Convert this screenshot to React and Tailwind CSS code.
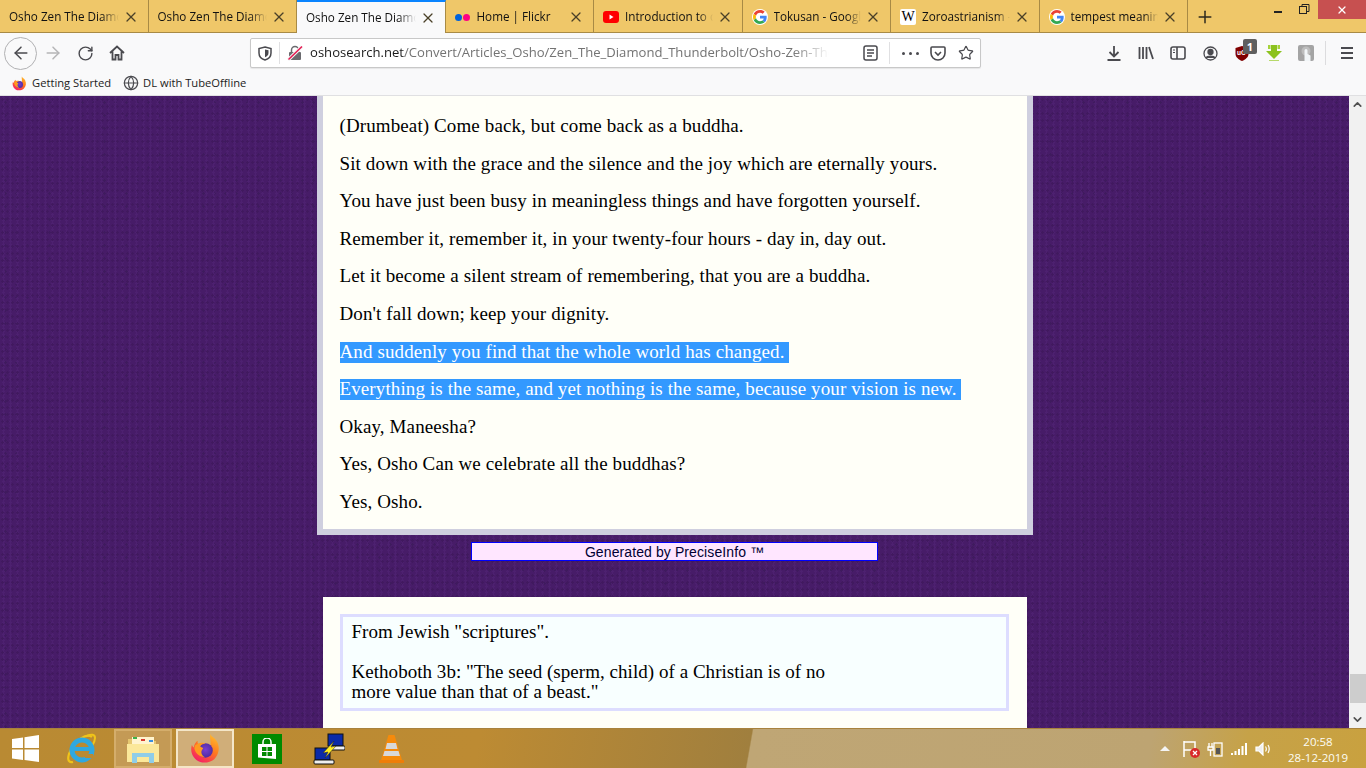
import { ArrowLeft, ArrowRight, RotateCw, Plus, X, Star, ChevronUp, ChevronDown, Globe } from "lucide-react";

const uiFont = "font-['Open_Sans','Noto_Sans',sans-serif]";

function FirefoxLogo({ size = 16, id = "ff" }) {
    return (
        <svg width={size} height={size} viewBox="0 0 32 32">
            <defs>
                <linearGradient id={`${id}Outer`} x1="0.8" y1="0" x2="0.2" y2="1">
                    <stop offset="0" stopColor="#ffbd2e" />
                    <stop offset="0.45" stopColor="#ff7a1f" />
                    <stop offset="1" stopColor="#f5156c" />
                </linearGradient>
                <radialGradient id={`${id}Inner`} cx="0.5" cy="0.45" r="0.6">
                    <stop offset="0" stopColor="#7a3fd0" />
                    <stop offset="1" stopColor="#4a2a9c" />
                </radialGradient>
            </defs>
            <path d="M21 1c1 3 5 4 7 8 3 6 2 13-3 18-5 4-13 5-18 1C2 24 0 18 2 12c.5 1.500 1 2 2 3 0-3 2-6 4-7-.5 2 0 3 1 4 2-1 5-1 7 0 3 0 4 1 5 2 1-5-1-9 0-13z" fill={`url(#${id}Outer)`} />
            <circle cx="16" cy="18" r="7.500" fill={`url(#${id}Inner)`} />
            <path d="M5 13c3-3 8-4 11-2-3 0-5 1-5.500 3 1 1 3 1 3 2-3 3-2 7 2 9 -5 0-10-4-11-9z" fill="#ff9a1f" />
        </svg>
    );
}

function GoogleIcon() {
    return (
        <span className="flex h-4 w-4 shrink-0 items-center justify-center rounded-full bg-white">
            <svg width="14" height="14" viewBox="0 0 48 48">
                <path fill="#EA4335" d="M24 9.500c3.500 0 6.700 1.300 9.100 3.400l6.800-6.800C35.800 2.400 30.300 0 24 0 14.600 0 6.500 5.400 2.600 13.200l7.900 6.200C12.400 13.600 17.700 9.500 24 9.500z" />
                <path fill="#4285F4" d="M46.900 24.500c0-1.600-.1-3.100-.4-4.500H24v9h12.900c-.6 3-2.200 5.500-4.700 7.200l7.700 6c4.500-4.200 7-10.300 7-17.700z" />
                <path fill="#FBBC05" d="M10.500 28.600c-.5-1.400-.8-3-.8-4.600s.3-3.200.8-4.600l-7.900-6.200C.9 16.500 0 20.100 0 24s.9 7.500 2.600 10.800l7.900-6.200z" />
                <path fill="#34A853" d="M24 48c6.500 0 11.900-2.100 15.900-5.800l-7.700-6c-2.200 1.400-4.900 2.300-8.200 2.300-6.300 0-11.600-4.100-13.500-9.900l-7.900 6.200C6.500 42.600 14.600 48 24 48z" />
            </svg>
        </span>
    );
}

const tabs = [
    { title: "Osho Zen The Diamond" },
    { title: "Osho Zen The Diamond" },
    { title: "Osho Zen The Diamond", active: true },
    { title: "Home | Flickr", icon: "flickr" },
    { title: "Introduction to chan", icon: "youtube" },
    { title: "Tokusan - Google", icon: "google" },
    { title: "Zoroastrianism - Wiki", icon: "wiki" },
    { title: "tempest meaning", icon: "google" },
];

function TabIcon({ type }) {
    if (type === "flickr") {
        return (
            <span className="flex w-4 shrink-0 items-center gap-[1px]">
                <span className="h-[7px] w-[7px] rounded-full bg-[#0063dc]" />
                <span className="h-[7px] w-[7px] rounded-full bg-[#ff0084]" />
            </span>
        );
    }
    if (type === "youtube") {
        return (
            <svg width="16" height="12" viewBox="0 0 16 12" className="shrink-0">
                <rect width="16" height="12" rx="3" fill="#f00" />
                <path d="M6.500 3.500v5l4-2.500z" fill="#fff" />
            </svg>
        );
    }
    if (type === "google") return <GoogleIcon />;
    if (type === "wiki") {
        return (
            <span className="flex h-4 w-4 shrink-0 items-center justify-center rounded-[2px] bg-white font-['Liberation_Serif',serif] text-[14px] leading-none text-black">
                W
            </span>
        );
    }
    return null;
}

function Tab({ title, icon, active }) {
    return (
        <div
            className={`relative flex w-[148.500px] shrink-0 items-center border-r border-[#a88a45] pl-[9px] pr-[9px] ${
                active ? "-mb-px border-t-2 border-t-[#0a84ff] bg-[#f9f9fa]" : "pt-[2px]"
            }`}
        >
            {icon && (
                <span className="mr-[6px] flex w-4 shrink-0 items-center justify-center">
                    <TabIcon type={icon} />
                </span>
            )}
            <span className="min-w-0 flex-1 overflow-hidden whitespace-nowrap text-[11.700px] text-[#111] [mask-image:linear-gradient(to_right,black_84%,transparent)]">
                {title}
            </span>
            <X size={16} strokeWidth={1.900} className="ml-[4px] shrink-0 text-[#4a4028]" />
        </div>
    );
}

function TabBar() {
    return (
        <div className="flex h-[33px] shrink-0 items-stretch border-b border-[#a88a45] bg-[#efc769]">
            {tabs.map((t, i) => (
                <Tab key={i} {...t} />
            ))}
            <div className="flex w-[34px] shrink-0 items-center justify-center pt-px">
                <Plus size={20} strokeWidth={1.800} className="text-[#2e2a1e]" />
            </div>
            <div className="flex flex-1 items-start justify-end">
                <div className="mr-[17px] mt-[11px] h-[2px] w-[8px] bg-[#222]" />
                <svg width="11" height="11" viewBox="0 0 11 11" className="mr-[8px] mt-[4px]" fill="none" stroke="#222">
                    <rect x="0.500" y="2.500" width="7" height="7" />
                    <path d="M3 2.500V.500h7v7H8" />
                </svg>
                <div className="flex h-[19px] w-[48px] items-center justify-center bg-[#c75050]">
                    <X size={12} strokeWidth={2.500} className="text-white" />
                </div>
            </div>
        </div>
    );
}

function Toolbar() {
    const grey = "#4a4a4f";
    return (
        <div className="flex h-[38px] shrink-0 items-center bg-[#f9f9fa] pt-[2px]">
            <div className="ml-[4px] flex h-[33px] w-[33px] shrink-0 items-center justify-center rounded-full border border-[#b1b1b3] bg-[#f9f9fa]">
                <ArrowLeft size={20} strokeWidth={1.800} color={grey} />
            </div>
            <div className="flex w-[32px] shrink-0 justify-center">
                <ArrowRight size={20} strokeWidth={1.800} color="#b5b5b7" />
            </div>
            <div className="flex w-[32px] shrink-0 justify-center">
                <RotateCw size={17} strokeWidth={2} color={grey} />
            </div>
            <div className="flex w-[32px] shrink-0 justify-center">
                <svg width="16" height="16" viewBox="0 0 16 16" fill="none" stroke={grey} strokeWidth="1.800">
                    <path d="M1 8l7-6.500L15 8M3.500 6.500V14.500h3V10h3v4.500h3V6.500" />
                </svg>
            </div>
            <div className="ml-[117px] flex h-[30px] w-[731px] shrink-0 items-center rounded-[2px] border border-[#c8c8c8] bg-white pr-[6px] shadow-[0_1px_1px_rgba(0,0,0,0.08)]">
                <div className="flex w-[28px] shrink-0 justify-center">
                    <svg width="14" height="15" viewBox="0 0 14 15" fill="none" stroke={grey} strokeWidth="1.500">
                        <path d="M7 1l6 1.500V7c0 3.500-2.500 6-6 7-3.500-1-6-3.500-6-7V2.500z" />
                        <path d="M7 3.500l3.500.8V7c0 2-1.400 3.500-3.500 4.300z" fill={grey} stroke="none" />
                    </svg>
                </div>
                <div className="h-[22px] w-px shrink-0 bg-[#e0e0e2]" />
                <div className="flex w-[30px] shrink-0 justify-center">
                    <svg width="16" height="16" viewBox="0 0 16 16">
                        <rect x="2" y="7" width="12" height="8" rx="1" fill="#6a6a6e" />
                        <path d="M4.500 7V5a3.500 3.500 0 017 0v2" fill="none" stroke="#6a6a6e" strokeWidth="1.500" />
                        <path d="M1 15L15 1.500" stroke="#f5f5f5" strokeWidth="3.500" />
                        <path d="M1.500 14.500L15 1.500" stroke="#e5174f" strokeWidth="1.500" />
                    </svg>
                </div>
                <div className="min-w-0 flex-1 overflow-hidden whitespace-nowrap text-[13.100px] text-[#737373] [mask-image:linear-gradient(to_right,black_93%,transparent)]">
                    <span className="text-[#1a1a1a]">oshosearch.net</span>/Convert/Articles_Osho/Zen_The_Diamond_Thunderbolt/Osho-Zen-The-Diamond
                </div>
                <div className="ml-[33px] flex w-[16px] shrink-0 justify-center">
                    <svg width="15" height="16" viewBox="0 0 15 16" fill="none" stroke={grey} strokeWidth="1.500">
                        <rect x="1" y="1" width="13" height="14" rx="2" />
                        <path d="M4 5h7M4 8h7M4 11h5" />
                    </svg>
                </div>
                <div className="ml-[11px] h-[22px] w-px shrink-0 bg-[#e0e0e2]" />
                <div className="ml-[12px] flex w-[17px] shrink-0 items-center justify-between">
                    <span className="h-[3px] w-[3px] rounded-full bg-[#4a4a4f]" />
                    <span className="h-[3px] w-[3px] rounded-full bg-[#4a4a4f]" />
                    <span className="h-[3px] w-[3px] rounded-full bg-[#4a4a4f]" />
                </div>
                <div className="ml-[11px] flex w-[16px] shrink-0 justify-center">
                    <svg width="16" height="15" viewBox="0 0 16 15" fill="none" stroke={grey} strokeWidth="1.600">
                        <path d="M2 1h12a1 1 0 011 1v5a7 7 0 01-14 0V2a1 1 0 011-1z" />
                        <path d="M5 6l3 3 3-3" />
                    </svg>
                </div>
                <div className="ml-[12px] flex w-[16px] shrink-0 justify-center">
                    <Star size={16} strokeWidth={1.800} color={grey} />
                </div>
            </div>
            <div className="ml-[125px] flex w-[16px] shrink-0 justify-center">
                <svg width="16" height="16" viewBox="0 0 16 16" fill="none" stroke={grey} strokeWidth="1.800">
                    <path d="M8 1v10M3.500 7L8 11.500 12.500 7M1.500 15h13" />
                </svg>
            </div>
            <div className="ml-[16px] flex w-[16px] shrink-0 justify-center">
                <svg width="16" height="16" viewBox="0 0 16 16" fill="none" stroke={grey} strokeWidth="1.800">
                    <path d="M1.500 2v12M5 2v12M8.500 2v12M11 2l4 12" />
                </svg>
            </div>
            <div className="ml-[16px] flex w-[16px] shrink-0 justify-center">
                <svg width="16" height="14" viewBox="0 0 16 14" fill="none" stroke={grey} strokeWidth="1.600">
                    <rect x="1" y="1" width="14" height="12" rx="2" />
                    <path d="M7 1v12" />
                    <path d="M3 4h2M3 6.500h2" strokeWidth="1" />
                </svg>
            </div>
            <div className="ml-[16px] flex w-[16px] shrink-0 justify-center">
                <svg width="15" height="15" viewBox="0 0 15 15" fill="none" stroke={grey} strokeWidth="1.300">
                    <circle cx="7.500" cy="7.500" r="6.500" />
                    <circle cx="7.500" cy="6" r="2.500" fill={grey} />
                    <path d="M3 12c1-2.500 8-2.500 9 0" fill={grey} />
                </svg>
            </div>
            <div className="relative ml-[16px] flex w-[16px] shrink-0 justify-center">
                <svg width="14" height="15" viewBox="0 0 14 15">
                    <path d="M7 0l6.500 2v6c0 3-3 5.500-6.500 7C3.500 13.500.500 11 .500 8V2z" fill="#800000" />
                    <text x="2" y="9" fontSize="6.500" fontWeight="700" fill="#fff" fontFamily="Liberation Sans, sans-serif">uO</text>
                </svg>
                <span className={`absolute -top-[7px] left-[9px] flex h-[15px] w-[14px] items-center justify-center rounded-[2px] bg-[#5f5f5f] text-[11px] font-bold leading-none text-white ${uiFont}`}>
                    1
                </span>
            </div>
            <div className="ml-[16px] flex w-[16px] shrink-0 justify-center">
                <svg width="16" height="16" viewBox="0 0 16 16">
                    <path d="M2 0h2.500v4H2zM11.500 0H14v4h-2.500z" fill="#a6d33c" />
                    <path d="M5 0h6v6h5L8 14 0 6h5z" fill="#8cc21f" />
                    <path d="M3 15h10v1H3z" fill="#b7d96a" />
                </svg>
            </div>
            <div className="ml-[16px] flex h-[16px] w-[16px] shrink-0 items-center justify-center rounded-[2px] bg-[#a4a4a4]">
                <svg width="16" height="16" viewBox="0 0 16 16">
                    <circle cx="8" cy="6" r="4.500" fill="#bdbdbd" />
                    <path d="M6.500 16V5.500a1.500 1.500 0 013 0V9l3 1.500V16z" fill="#f2f6f8" />
                </svg>
            </div>
            <div className="ml-[11px] h-[24px] w-px shrink-0 bg-[#dcdcde]" />
            <div className="ml-[15px] flex w-[12px] shrink-0 flex-col gap-[3px]">
                <span className="h-[2px] w-full bg-[#4a4a4f]" />
                <span className="h-[2px] w-full bg-[#4a4a4f]" />
                <span className="h-[2px] w-full bg-[#4a4a4f]" />
            </div>
        </div>
    );
}

function Bookmarks() {
    return (
        <div className="flex h-[25px] shrink-0 items-center border-b border-[#e0e0e2] bg-[#f9f9fa] pl-[12px] text-[11.200px] text-[#222]">
            <FirefoxLogo size={15} id="ffMark" />
            <span className="ml-[5px]">Getting Started</span>
            <Globe size={16} strokeWidth={1.800} color="#4a4a4f" className="ml-[12px]" />
            <span className="ml-[4px]">DL with TubeOffline</span>
        </div>
    );
}

const paragraphs = [
    { text: "(Drumbeat) Come back, but come back as a buddha." },
    { text: "Sit down with the grace and the silence and the joy which are eternally yours." },
    { text: "You have just been busy in meaningless things and have forgotten yourself." },
    { text: "Remember it, remember it, in your twenty-four hours - day in, day out." },
    { text: "Let it become a silent stream of remembering, that you are a buddha." },
    { text: "Don't fall down; keep your dignity." },
    { text: "And suddenly you find that the whole world has changed.", selected: true },
    { text: "Everything is the same, and yet nothing is the same, because your vision is new.", selected: true },
    { text: "Okay, Maneesha?" },
    { text: "Yes, Osho Can we celebrate all the buddhas?" },
    { text: "Yes, Osho." },
];

function Page() {
    return (
        <div className="flex min-h-0 flex-1">
            <main className="min-w-0 flex-1 overflow-hidden bg-[#471c68] bg-[radial-gradient(circle,#41195f_1px,transparent_1.500px),radial-gradient(circle,#4d2170_1px,transparent_1.500px),radial-gradient(circle,#3f1b5e_1px,transparent_1.200px)] bg-[length:5px_7px,7px_3px,11px_13px]">
                <div className="mx-auto w-[716px] border-x-[6px] border-b-[6px] border-[#cfcfdf] bg-[#fffff8] px-[17px] pb-[17px] pt-[20px] font-['Liberation_Serif',serif] text-[19px] tracking-[0.11px] text-black">
                    <div className="flex flex-col gap-[17.600px]">
                        {paragraphs.map((p, i) => (
                            <p key={i} className="h-[20px] whitespace-nowrap leading-[20px]">
                                <span className={p.selected ? "inline-block h-[21px] bg-[#3399ff] pr-[4px] text-white" : ""}>
                                    {p.text}
                                </span>
                            </p>
                        ))}
                    </div>
                </div>
                <div className="mx-auto mt-[7px] h-[19px] w-[407px] border border-[#0000ff] bg-[#ffe6ff] text-center font-['Liberation_Sans',sans-serif] text-[14px] tracking-[0.1px] leading-[18px] text-[#000033]">
                    Generated by PreciseInfo ™
                </div>
                <div className="mx-auto mt-[36px] h-[200px] w-[704px] bg-[#fffff8] px-[17px] pt-[17px] font-['Liberation_Serif',serif] text-[19px] tracking-[0.04px] text-black">
                    <div className="h-[97px] w-[669px] border-[3px] border-[#ddddff] bg-[#f8ffff] px-[9px] pt-[5px] leading-[20px]">
                        <p>From Jewish "scriptures".</p>
                        <p className="mt-[20px]">
                            Kethoboth 3b: "The seed (sperm, child) of a Christian is of no
                            <br />
                            more value than that of a beast."
                        </p>
                    </div>
                </div>
            </main>
            <div className="flex w-[17px] shrink-0 flex-col bg-[#f1f1f1]">
                <div className="flex h-[17px] items-center justify-center">
                    <ChevronUp size={13} strokeWidth={3} color="#505050" />
                </div>
                <div className="min-h-0 flex-1" />
                <div className="ml-px h-[29px] bg-[#cdcdcd]" />
                <div className="h-[8px]" />
                <div className="flex h-[17px] items-center justify-center">
                    <ChevronDown size={13} strokeWidth={3} color="#505050" />
                </div>
            </div>
        </div>
    );
}

function TaskSlot({ children, highlight }) {
    return (
        <div
            className={`flex h-[39px] w-[58px] shrink-0 items-center justify-center ${
                highlight === "active"
                    ? "border-2 border-[#f4e6c8] bg-[#d0ae79]"
                    : highlight === "open"
                      ? "border-2 border-[#d4ad6b] bg-[#c49a55]"
                      : ""
            }`}
        >
            {children}
        </div>
    );
}

function Taskbar() {
    return (
        <div className="flex h-[40px] shrink-0 items-center border-t border-[#a8823c] bg-[linear-gradient(100deg,#b98a33_0%,#bd8b33_35%,#a07f3e_54.800%,#bfa675_54.900%,#bda472_84%,#c6a248_91%,#c9a13f_100%)]">
            <div className="flex w-[50px] shrink-0 justify-center">
                <svg width="27" height="27" viewBox="0 0 27 27" fill="#fff">
                    <path d="M0 4l11-1.500V13H0zM12.500 2.300L27 0v13H12.500zM0 14.500h11V25L0 23.500zM12.500 14.500H27V27l-14.500-2z" />
                </svg>
            </div>
            <div className="ml-[2px] flex gap-[4px]">
                <TaskSlot>
                    <svg width="32" height="32" viewBox="0 0 32 32" fill="none">
                        <path d="M27 4C22 0 10 6 4 21c-2 6 0 9 4 8" stroke="#f0c419" strokeWidth="2.200" />
                        <path d="M22 3c4-2 8-2 8 2 0 2-1 5-3 8" stroke="#f0c419" strokeWidth="2" />
                        <circle cx="17" cy="17" r="10" stroke="#2fa8e0" strokeWidth="5" />
                        <path d="M9 16h17" stroke="#2fa8e0" strokeWidth="4" />
                        <path d="M20 23h8" stroke="#b98a33" strokeWidth="4" />
                    </svg>
                </TaskSlot>
                <TaskSlot highlight="open">
                    <svg width="32" height="30" viewBox="0 0 32 30">
                        <path d="M1 5h10l2 2h16v17H1z" fill="#e6c770" />
                        <rect x="5" y="3" width="22" height="8" fill="#fff4cf" />
                        <rect x="6" y="3" width="4" height="2" fill="#3fb24a" />
                        <rect x="14" y="5" width="4" height="2" fill="#d83b2f" />
                        <rect x="22" y="6" width="4" height="2" fill="#3a8fdd" />
                        <path d="M0 10h32v18H0z" fill="#fbe89a" />
                        <path d="M5 29v-10h22v10h-5v-6H10v6z" fill="#8fcde8" />
                    </svg>
                </TaskSlot>
                <TaskSlot highlight="active">
                    <FirefoxLogo size={31} id="ffTask" />
                </TaskSlot>
                <TaskSlot>
                    <div className="flex h-[30px] w-[30px] items-center justify-center bg-[#008a00]">
                        <svg width="20" height="22" viewBox="0 0 20 22">
                            <path d="M1 6h18v15l-18-1.500z" fill="#fff" />
                            <path d="M6 6V4a4 4 0 018 0v2" fill="none" stroke="#fff" strokeWidth="1.500" />
                            <path d="M5 9h4.500v4H5zM10.500 9H15v4h-4.500zM5 14h4.500v4H5zM10.500 14H15v4h-4.500z" fill="#008a00" />
                        </svg>
                    </div>
                </TaskSlot>
                <TaskSlot>
                    <svg width="32" height="32" viewBox="0 0 32 32">
                        <rect x="15" y="1" width="15" height="12" fill="#0b2aa8" stroke="#111" />
                        <rect x="16" y="13" width="16" height="4" rx="1" fill="#eee" stroke="#111" />
                        <rect x="2" y="15" width="15" height="12" fill="#0b2aa8" stroke="#111" />
                        <rect x="1" y="27" width="20" height="4" rx="1" fill="#eee" stroke="#111" />
                        <path d="M21 8L10 20l5-1-3 6 11-12-5 1z" fill="#ffee22" stroke="#222" strokeWidth="0.500" />
                    </svg>
                </TaskSlot>
                <TaskSlot>
                    <svg width="27" height="30" viewBox="0 0 27 30">
                        <path d="M10.500 1h6L24 26H3z" fill="#f58a0b" />
                        <path d="M9 9h9l1.500 6h-12zM6.500 17h14l1.500 5H5z" fill="#d8d8d8" />
                        <path d="M1 26h25v3H1z" fill="#ee7d08" />
                    </svg>
                </TaskSlot>
            </div>
            <div className="flex-1" />
            <div className="flex items-center">
                <svg width="10" height="5" viewBox="0 0 10 5" fill="#f4f4f4">
                    <path d="M0 5l5-5 5 5z" />
                </svg>
                <div className="relative ml-[12px]">
                    <svg width="16" height="17" viewBox="0 0 16 17" fill="none" stroke="#fff" strokeWidth="1.500">
                        <path d="M2 1v16M2 2h11v8H2" />
                    </svg>
                    <svg width="10" height="10" viewBox="0 0 10 10" className="absolute -bottom-[1px] left-[8px]">
                        <circle cx="5" cy="5" r="5" fill="#d92a2a" />
                        <path d="M3 3l4 4M7 3L3 7" stroke="#fff" strokeWidth="1.300" />
                    </svg>
                </div>
                <svg width="16" height="16" viewBox="0 0 16 16" fill="none" stroke="#fff" strokeWidth="1.300" className="ml-[9px]">
                    <rect x="7" y="2" width="8" height="13" />
                    <rect x="9" y="7" width="4" height="6" fill="#555" stroke="none" />
                    <path d="M2 2v4M5 2v4M1 6h5v3H1zM3.500 9v6" />
                </svg>
                <svg width="16" height="12" viewBox="0 0 16 12" fill="#fff" className="ml-[8px]">
                    <path d="M0 10h2v2H0zM3.500 8h2v4h-2zM7 6h2v6H7zM10.500 3h2v9h-2zM14 0h2v12h-2z" />
                </svg>
                <svg width="16" height="14" viewBox="0 0 16 14" fill="none" stroke="#fff" strokeWidth="1.200" className="ml-[8px]">
                    <path d="M1 5h3l4-4v12l-4-4H1z" fill="#eee" />
                    <path d="M10.500 4.500c1 1.500 1 3.500 0 5M13 3c1.500 2.500 1.500 5.500 0 8" />
                </svg>
            </div>
            <div className={`ml-[2px] mr-[3px] mt-[2px] flex w-[90px] flex-col items-center text-[11.500px] leading-[16px] text-[#fdfdf5] ${uiFont}`}>
                <span>20:58</span>
                <span>28-12-2019</span>
            </div>
        </div>
    );
}

export default function App() {
    return (
        <div className={`flex h-screen w-full flex-col overflow-hidden ${uiFont}`}>
            <TabBar />
            <Toolbar />
            <Bookmarks />
            <Page />
            <Taskbar />
        </div>
    );
}
